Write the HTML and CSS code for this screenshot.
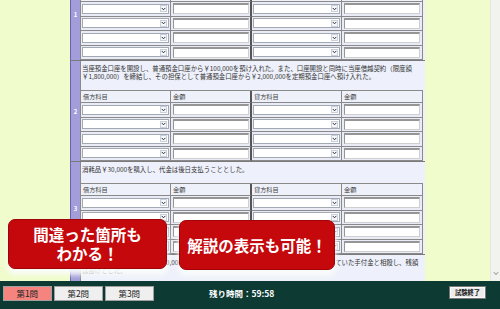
FILE: index.html
```html
<!DOCTYPE html>
<html lang="ja">
<head>
<meta charset="utf-8">
<link rel="stylesheet" href="styles.css">
</head>
<body>
<div class="main">
  <div class="gutter"></div>
  <div class="panel">
    <div class="scroller">
      <section class="q">
        <div class="qnum">1</div>
        <div class="qbody">
          <p class="qtext">現金￥500,000を元入れして開業した。</p>
          <div class="jtable">
            <div class="th">借方科目</div><div class="th sep">金額</div><div class="th">貸方科目</div><div class="th">金額</div>
            <div class="td"><div class="sel"><span class="arr"><svg viewBox="0 0 7 5"><path d="M1 1L3.5 3.6L6 1"/></svg></span></div></div><div class="td sep"><div class="inp"></div></div><div class="td"><div class="sel"><span class="arr"><svg viewBox="0 0 7 5"><path d="M1 1L3.5 3.6L6 1"/></svg></span></div></div><div class="td"><div class="inp"></div></div>
            <div class="td"><div class="sel"><span class="arr"><svg viewBox="0 0 7 5"><path d="M1 1L3.5 3.6L6 1"/></svg></span></div></div><div class="td sep"><div class="inp"></div></div><div class="td"><div class="sel"><span class="arr"><svg viewBox="0 0 7 5"><path d="M1 1L3.5 3.6L6 1"/></svg></span></div></div><div class="td"><div class="inp"></div></div>
            <div class="td"><div class="sel"><span class="arr"><svg viewBox="0 0 7 5"><path d="M1 1L3.5 3.6L6 1"/></svg></span></div></div><div class="td sep"><div class="inp"></div></div><div class="td"><div class="sel"><span class="arr"><svg viewBox="0 0 7 5"><path d="M1 1L3.5 3.6L6 1"/></svg></span></div></div><div class="td"><div class="inp"></div></div>
            <div class="td"><div class="sel"><span class="arr"><svg viewBox="0 0 7 5"><path d="M1 1L3.5 3.6L6 1"/></svg></span></div></div><div class="td sep"><div class="inp"></div></div><div class="td"><div class="sel"><span class="arr"><svg viewBox="0 0 7 5"><path d="M1 1L3.5 3.6L6 1"/></svg></span></div></div><div class="td"><div class="inp"></div></div>
          </div>
        </div>
      </section>
      <section class="q">
        <div class="qnum">2</div>
        <div class="qbody">
          <p class="qtext">当座預金口座を開設し、普通預金口座から￥100,000を預け入れた。また、口座開設と同時に当座借越契約（限度額￥1,800,000）を締結し、その担保として普通預金口座から￥2,000,000を定期預金口座へ預け入れた。</p>
          <div class="jtable">
            <div class="th">借方科目</div><div class="th sep">金額</div><div class="th">貸方科目</div><div class="th">金額</div>
            <div class="td"><div class="sel"><span class="arr"><svg viewBox="0 0 7 5"><path d="M1 1L3.5 3.6L6 1"/></svg></span></div></div><div class="td sep"><div class="inp"></div></div><div class="td"><div class="sel"><span class="arr"><svg viewBox="0 0 7 5"><path d="M1 1L3.5 3.6L6 1"/></svg></span></div></div><div class="td"><div class="inp"></div></div>
            <div class="td"><div class="sel"><span class="arr"><svg viewBox="0 0 7 5"><path d="M1 1L3.5 3.6L6 1"/></svg></span></div></div><div class="td sep"><div class="inp"></div></div><div class="td"><div class="sel"><span class="arr"><svg viewBox="0 0 7 5"><path d="M1 1L3.5 3.6L6 1"/></svg></span></div></div><div class="td"><div class="inp"></div></div>
            <div class="td"><div class="sel"><span class="arr"><svg viewBox="0 0 7 5"><path d="M1 1L3.5 3.6L6 1"/></svg></span></div></div><div class="td sep"><div class="inp"></div></div><div class="td"><div class="sel"><span class="arr"><svg viewBox="0 0 7 5"><path d="M1 1L3.5 3.6L6 1"/></svg></span></div></div><div class="td"><div class="inp"></div></div>
            <div class="td"><div class="sel"><span class="arr"><svg viewBox="0 0 7 5"><path d="M1 1L3.5 3.6L6 1"/></svg></span></div></div><div class="td sep"><div class="inp"></div></div><div class="td"><div class="sel"><span class="arr"><svg viewBox="0 0 7 5"><path d="M1 1L3.5 3.6L6 1"/></svg></span></div></div><div class="td"><div class="inp"></div></div>
          </div>
        </div>
      </section>
      <section class="q">
        <div class="qnum">3</div>
        <div class="qbody">
          <p class="qtext">消耗品￥30,000を購入し、代金は後日支払うこととした。</p>
          <div class="jtable">
            <div class="th">借方科目</div><div class="th sep">金額</div><div class="th">貸方科目</div><div class="th">金額</div>
            <div class="td"><div class="sel"><span class="arr"><svg viewBox="0 0 7 5"><path d="M1 1L3.5 3.6L6 1"/></svg></span></div></div><div class="td sep"><div class="inp"></div></div><div class="td"><div class="sel"><span class="arr"><svg viewBox="0 0 7 5"><path d="M1 1L3.5 3.6L6 1"/></svg></span></div></div><div class="td"><div class="inp"></div></div>
            <div class="td"><div class="sel"><span class="arr"><svg viewBox="0 0 7 5"><path d="M1 1L3.5 3.6L6 1"/></svg></span></div></div><div class="td sep"><div class="inp"></div></div><div class="td"><div class="sel"><span class="arr"><svg viewBox="0 0 7 5"><path d="M1 1L3.5 3.6L6 1"/></svg></span></div></div><div class="td"><div class="inp"></div></div>
            <div class="td"><div class="sel"><span class="arr"><svg viewBox="0 0 7 5"><path d="M1 1L3.5 3.6L6 1"/></svg></span></div></div><div class="td sep"><div class="inp"></div></div><div class="td"><div class="sel"><span class="arr"><svg viewBox="0 0 7 5"><path d="M1 1L3.5 3.6L6 1"/></svg></span></div></div><div class="td"><div class="inp"></div></div>
            <div class="td"><div class="sel"><span class="arr"><svg viewBox="0 0 7 5"><path d="M1 1L3.5 3.6L6 1"/></svg></span></div></div><div class="td sep"><div class="inp"></div></div><div class="td"><div class="sel"><span class="arr"><svg viewBox="0 0 7 5"><path d="M1 1L3.5 3.6L6 1"/></svg></span></div></div><div class="td"><div class="inp"></div></div>
          </div>
        </div>
      </section>
      <section class="q">
        <div class="qnum">4</div>
        <div class="qbody">
          <p class="qtext">商品を仕入れ、その代金￥250,000のうち、￥60,000は先月の注文時にあらかじめ支払っていた手付金と相殺し、残額は掛けとした。</p>
          <div class="jtable">
            <div class="th">借方科目</div><div class="th sep">金額</div><div class="th">貸方科目</div><div class="th">金額</div>
            <div class="td"><div class="sel"><span class="arr"><svg viewBox="0 0 7 5"><path d="M1 1L3.5 3.6L6 1"/></svg></span></div></div><div class="td sep"><div class="inp"></div></div><div class="td"><div class="sel"><span class="arr"><svg viewBox="0 0 7 5"><path d="M1 1L3.5 3.6L6 1"/></svg></span></div></div><div class="td"><div class="inp"></div></div>
          </div>
        </div>
      </section>
    </div>
  </div>
  <div class="spacer"></div>
  <div class="scrollbar">
    <svg class="sb-arrow" viewBox="0 0 7 5"><path d="M1 1L3.5 3.6L6 1"/></svg>
  </div>
  <div class="callout c1">間違った箇所も<br>わかる！</div>
  <div class="callout c2">解説の表示も可能！</div>
</div>
<div class="bar">
  <div class="tab on">第1問</div>
  <div class="tab">第2問</div>
  <div class="tab">第3問</div>
  <div class="timer">残り時間：59:58</div>
  <div class="end">試験終了</div>
</div>
</body>
</html>
```

FILE: styles.css
```css
* { box-sizing: border-box; margin: 0; padding: 0; }
html, body { width: 500px; height: 309px; overflow: hidden; }
body {
  background: #f0fccb;
  font-family: "Noto Sans CJK JP", "Noto Sans", sans-serif;
  color: #333;
}

.main {
  display: flex;
  height: 281px;
  position: relative;
  overflow: hidden;
}
.gutter { width: 70px; flex: none; }
.spacer { flex: 1; }
.panel {
  width: 355px;
  flex: none;
  background: #eef1fb;
  overflow: hidden;
}
.scroller { margin-top: -33px; }

.scrollbar {
  width: 10px;
  flex: none;
  background: #f2f2ef;
  border-left: 1px solid #e6e6e0;
  display: flex;
  flex-direction: column;
  justify-content: flex-end;
  align-items: center;
  padding-bottom: 5px;
}
.sb-arrow { width: 6px; height: 5px; }
.sb-arrow path { fill: none; stroke: #777; stroke-width: 1.1; }

.q {
  display: flex;
  border-top: 1px solid #7a7a7a;
}
.qnum {
  width: 10px;
  flex: none;
  background: #a39dd9;
  border-left: 1px solid #6a63b3;
  display: flex;
  align-items: center;
  justify-content: center;
  color: #fff;
  font-size: 6px;
  font-weight: bold;
}
.qbody {
  flex: 1;
  border-left: 1px solid #8a8a8a;
  padding-right: 2px;
}
.qtext {
  font-size: 6.4px;
  line-height: 8px;
  padding: 4px 1px 9px 1px;
  color: #333;
}

.jtable {
  display: grid;
  grid-template-columns: 90px 81px 90px 81px;
  border-top: 1px solid #8a8a8a;
  background: #e9ecf7;
}
.th, .td {
  border-right: 1px solid #8a8a8a;
  border-bottom: 1px solid #8a8a8a;
}
.th {
  height: 12px;
  font-size: 6.2px;
  line-height: 11px;
  padding-left: 2px;
  color: #444;
  background: #eef1fa;
}
.td {
  height: 14.5px;
  display: flex;
  align-items: center;
}
.th.sep, .td.sep { border-right: 2px solid #555; }

.sel {
  margin-left: 1px;
  width: 87px;
  height: 10px;
  background: #fff;
  border: 1px solid #a3a9b3;
  display: flex;
  justify-content: flex-end;
  align-items: center;
  padding-right: 1px;
}
.arr {
  width: 7px;
  height: 7px;
  border: 1px solid #c9d0dc;
  background: #f5f7fb;
  display: flex;
  align-items: center;
  justify-content: center;
}
.arr svg { width: 5px; height: 4px; }
.arr path { fill: none; stroke: #222; stroke-width: 1.3; }

.inp {
  margin-left: 2px;
  width: 76px;
  height: 11px;
  background: #fff;
  border: 1px solid #cfcfcf;
  border-top: 2px solid #959595;
  border-left: 1px solid #959595;
}

.callout {
  position: absolute;
  background: #c4080c;
  border: 1px solid #a00408;
  color: #fff;
  font-weight: bold;
  font-size: 15.5px;
  line-height: 19px;
  border-radius: 7px;
  display: flex;
  align-items: center;
  justify-content: center;
  text-align: center;
  box-shadow: 0 5px 5px 1px rgba(250, 252, 250, 0.92);
}
.c1 { left: 8px; top: 219px; width: 159px; height: 50px; }
.c2 { left: 179px; top: 220px; width: 156px; height: 50px; }

.bar {
  height: 28px;
  background: #0d3b33;
  display: flex;
  align-items: flex-start;
  padding: 5px 15px 0 3px;
  gap: 2.5px;
}
.tab {
  width: 48.5px;
  height: 15px;
  background: #efefef;
  border: 1px solid #a0a0a0;
  font-size: 8.5px;
  line-height: 13px;
  text-align: center;
  color: #222;
}
.tab.on { background: #f5847f; }
.timer {
  margin-left: 53px;
  color: #fff;
  font-weight: bold;
  font-size: 8.5px;
  line-height: 15px;
}
.end {
  margin-left: auto;
  margin-top: 1px;
  width: 35px;
  height: 11px;
  background: #ececec;
  border: 1px solid #fafafa;
  outline: 1px solid #777;
  font-size: 6.3px;
  font-weight: bold;
  line-height: 9px;
  text-align: center;
  color: #111;
}
```
